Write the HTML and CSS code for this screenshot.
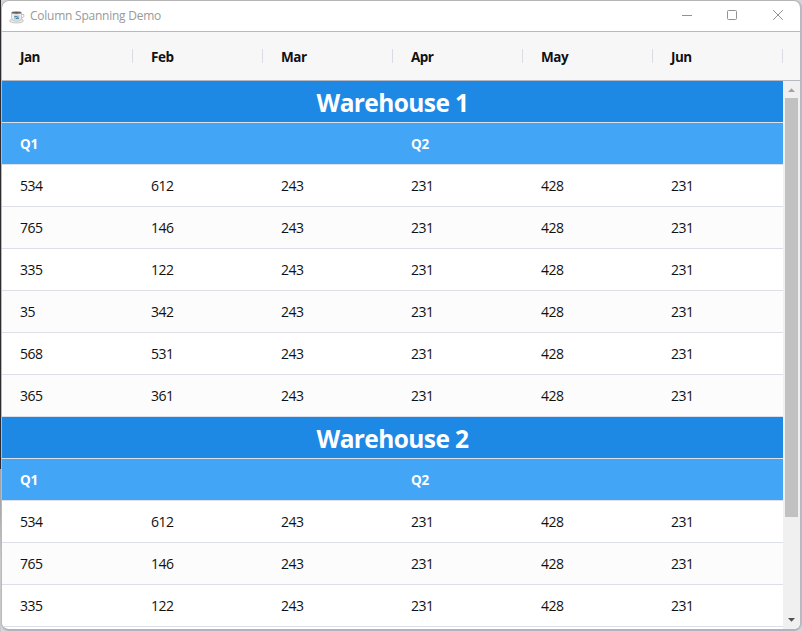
FILE: index.html
```html
<!DOCTYPE html>
<html lang="en">
<head>
<meta charset="utf-8">
<title>Column Spanning Demo</title>
<link rel="stylesheet" href="styles.css">
</head>
<body>
<div class="window">
  <header class="titlebar">
    <svg class="app-icon" width="16" height="16" viewBox="0 0 16 16">
      <ellipse cx="7.500" cy="11.800" rx="7" ry="2.200" fill="#e8e8e8" stroke="#b5b5b5" stroke-width=".7"/>
      <path d="M2.500 4V8.500Q3 11.800 6 12H9.500Q12.500 11.500 12.500 8.500V4Z" fill="#eee" stroke="#b8b8b8" stroke-width=".7"/>
      <path d="M12.500 5.500H14.800V7.500Q14.500 9 12.300 9" fill="none" stroke="#b0b0b0" stroke-width=".8"/>
      <ellipse cx="7.500" cy="3.700" rx="5" ry="1.200" fill="#5f5754" stroke="#b8b8b8" stroke-width=".6"/>
      <path d="M5 6.500H10.300V10.500H5Z" fill="#a5c5d7"/>
      <path d="M5.500 7.500H8L9.500 9.500H7" fill="none" stroke="#4f86a8"/>
    </svg>
    <span class="title">Column Spanning Demo</span>
    <svg class="controls" width="120" height="30" viewBox="0 0 120 30" fill="none" stroke="#929292">
      <path d="M2 14.500H12"/>
      <rect x="47.500" y="9.500" width="9" height="9" rx="1"/>
      <path d="M93.200 9.200L102.800 18.800M102.800 9.200L93.200 18.800"/>
    </svg>
  </header>
  <div class="row head"><span>Jan</span><span>Feb</span><span>Mar</span><span>Apr</span><span>May</span><span>Jun</span></div>
  <div class="body">
    <main class="rows">
      <div class="row warehouse"><span>Warehouse 1</span></div>
      <div class="row quarter"><span>Q1</span><span>Q2</span></div>
      <div class="row"><span>534</span><span>612</span><span>243</span><span>231</span><span>428</span><span>231</span></div>
      <div class="row alt"><span>765</span><span>146</span><span>243</span><span>231</span><span>428</span><span>231</span></div>
      <div class="row"><span>335</span><span>122</span><span>243</span><span>231</span><span>428</span><span>231</span></div>
      <div class="row alt"><span>35</span><span>342</span><span>243</span><span>231</span><span>428</span><span>231</span></div>
      <div class="row"><span>568</span><span>531</span><span>243</span><span>231</span><span>428</span><span>231</span></div>
      <div class="row alt"><span>365</span><span>361</span><span>243</span><span>231</span><span>428</span><span>231</span></div>
      <div class="row warehouse"><span>Warehouse 2</span></div>
      <div class="row quarter"><span>Q1</span><span>Q2</span></div>
      <div class="row"><span>534</span><span>612</span><span>243</span><span>231</span><span>428</span><span>231</span></div>
      <div class="row alt"><span>765</span><span>146</span><span>243</span><span>231</span><span>428</span><span>231</span></div>
      <div class="row"><span>335</span><span>122</span><span>243</span><span>231</span><span>428</span><span>231</span></div>
    </main>
    <aside class="scrollbar">
      <svg width="17" height="17" viewBox="0 0 17 17"><path d="M5 11L8.500 7.200L12 11Z" fill="#a3a3a3"/></svg>
      <div class="thumb"></div>
      <svg width="17" height="17" viewBox="0 0 17 17"><path d="M5 6L8.500 9.800L12 6Z" fill="#505050"/></svg>
    </aside>
  </div>
</div>
</body>
</html>
```

FILE: styles.css
```css
* { box-sizing: border-box; }
body {
  margin: 0;
  width: 802px;
  height: 632px;
  overflow: hidden;
  background: linear-gradient(#2d2b2f 0 469px, #a5a5a8 469px 500px, #c9c9cc 560px) 0 0 / 1px 632px no-repeat, #d4d5d8;
  font-family: "Open Sans", "Noto Sans", sans-serif;
  font-size: 14px;
  letter-spacing: -.48px;
  color: #111;
}
.window {
  width: 801px;
  height: 631px;
  margin-left: 1px;
  display: flex;
  flex-direction: column;
  border: 1px solid #b6b9c2;
  border-top-color: #b5b5b5;
  border-right: 2px solid #b6bac4;
  border-bottom: 2px solid #b0b3bb;
  border-radius: 8px;
  overflow: hidden;
  background: #fff;
}
.titlebar {
  height: 31px;
  flex: none;
  display: flex;
  align-items: flex-start;
  border-bottom: 1px solid #b7b9c5;
}
.app-icon { margin: 8px 0 0 7px; }
.title {
  margin-left: 5px;
  font: 12px/30px "Open Sans", sans-serif;
  letter-spacing: -.24px;
  color: #999;
  white-space: nowrap;
}
.controls { margin-left: auto; }
.row {
  display: grid;
  grid-template-columns: 131px repeat(5, 130px);
  height: 42px;
  flex: none;
  border-bottom: 1px solid #dcdfe8;
  line-height: 42px;
}
.row span { padding-left: 18px; white-space: nowrap; }
.alt { background: #fcfcfc; }
.head {
  height: 49px;
  background: #f7f7f7;
  border-bottom-color: #b6b9c2;
  line-height: 50px;
  font-weight: 700;
  font-size: 13.5px;
  letter-spacing: -.5px;
}
.head span {
  background: linear-gradient(#d9dce5, #d9dce5) right 17px / 1px 14px no-repeat;
}
.body { display: flex; flex: 1; min-height: 0; }
.rows { width: 781px; flex: none; overflow: hidden; }
.warehouse, .quarter { color: #fff; font-weight: 700; }
.warehouse {
  grid-template-columns: 1fr;
  background: #1e88e5;
  font-size: 24.5px;
  letter-spacing: -.6px;
  line-height: 44px;
  text-align: center;
}
.warehouse span { padding: 0; height: 41px; }
.quarter {
  grid-template-columns: 391px 390px;
  background: #42a5f5;
  font-size: 13.5px;
  letter-spacing: -.2px;
}
.scrollbar {
  width: 17px;
  flex: none;
  display: flex;
  flex-direction: column;
  justify-content: space-between;
  background: #f0f0f0;
}
.thumb { width: 13px; height: 419px; margin: 0 2px auto; background: #c1c1c1; }
```
